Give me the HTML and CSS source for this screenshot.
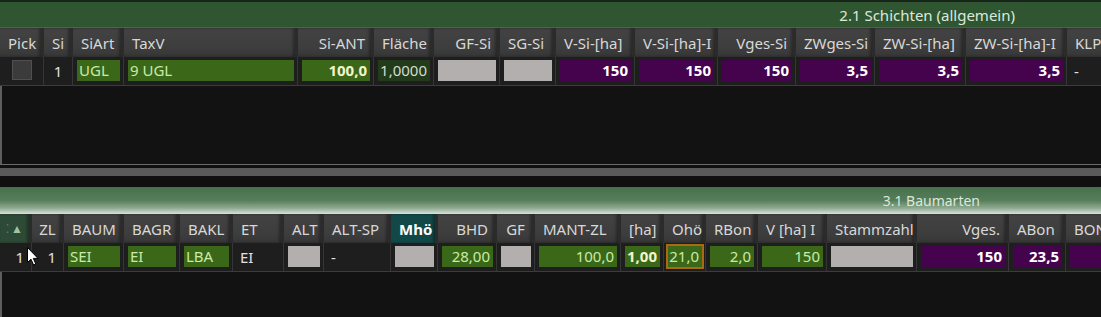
FILE: index.html
```html
<!DOCTYPE html>
<html lang="de">
<head>
  <meta charset="UTF-8">
  <title>Schichten / Baumarten</title>
  <link rel="stylesheet" href="styles.css">
</head>
<body>
  <!-- 2.1 Schichten -->
  <section class="panel panel-top">
    <div class="panel-title top-title">2.1 Schichten (allgemein)</div>
    <div class="grid grid-top">
      <div class="hd">Pick</div>
      <div class="hd">Si</div>
      <div class="hd">SiArt</div>
      <div class="hd">TaxV</div>
      <div class="hd right">Si-ANT</div>
      <div class="hd">Fläche</div>
      <div class="hd right">GF-Si</div>
      <div class="hd">SG-Si</div>
      <div class="hd">V-Si-[ha]</div>
      <div class="hd">V-Si-[ha]-I</div>
      <div class="hd right">Vges-Si</div>
      <div class="hd">ZWges-Si</div>
      <div class="hd">ZW-Si-[ha]</div>
      <div class="hd">ZW-Si-[ha]-I</div>
      <div class="hd">KLP</div>

      <div class="cell"><span class="check"></span></div>
      <div class="cell plain center">1</div>
      <div class="cell"><span class="box green">UGL</span></div>
      <div class="cell"><span class="box green">9 UGL</span></div>
      <div class="cell"><span class="box green num bold pale">100,0</span></div>
      <div class="cell"><span class="box dim num">1,0000</span></div>
      <div class="cell"><span class="box gray"></span></div>
      <div class="cell"><span class="box gray"></span></div>
      <div class="cell"><span class="box purple num bold">150</span></div>
      <div class="cell"><span class="box purple num bold">150</span></div>
      <div class="cell"><span class="box purple num bold">150</span></div>
      <div class="cell"><span class="box purple num bold">3,5</span></div>
      <div class="cell"><span class="box purple num bold">3,5</span></div>
      <div class="cell"><span class="box purple num bold">3,5</span></div>
      <div class="cell plain">-</div>
    </div>
    <div class="empty empty-top"></div>
  </section>

  <div class="splitter"><div class="splitter-bar"></div></div>

  <!-- 3.1 Baumarten -->
  <section class="panel panel-bottom">
    <div class="panel-title bottom-title">3.1 Baumarten</div>
    <div class="grid grid-bottom">
      <div class="hd sort"><span class="dots">⁚</span>▲</div>
      <div class="hd center">ZL</div>
      <div class="hd">BAUM</div>
      <div class="hd">BAGR</div>
      <div class="hd">BAKL</div>
      <div class="hd">ET</div>
      <div class="hd">ALT</div>
      <div class="hd">ALT-SP</div>
      <div class="hd teal">Mhö</div>
      <div class="hd right">BHD</div>
      <div class="hd center">GF</div>
      <div class="hd">MANT-ZL</div>
      <div class="hd">[ha]</div>
      <div class="hd">Ohö</div>
      <div class="hd">RBon</div>
      <div class="hd">V [ha] I</div>
      <div class="hd">Stammzahl</div>
      <div class="hd right">Vges.</div>
      <div class="hd">ABon</div>
      <div class="hd">BON</div>

      <div class="cell plain num rowno">1
        <svg class="cursor" width="12" height="19" viewBox="0 0 12 19">
          <path d="M0.5 0.5 L0.5 15.5 L4 12.2 L6.6 18 L8.8 17 L6.3 11.4 L11 11.4 Z" fill="#fff" stroke="#000" stroke-width="1"/>
        </svg>
      </div>
      <div class="cell plain num">1</div>
      <div class="cell"><span class="box green">SEI</span></div>
      <div class="cell"><span class="box green">EI</span></div>
      <div class="cell"><span class="box green">LBA</span></div>
      <div class="cell plain">EI</div>
      <div class="cell"><span class="box gray"></span></div>
      <div class="cell plain">-</div>
      <div class="cell"><span class="box gray"></span></div>
      <div class="cell"><span class="box green num">28,00</span></div>
      <div class="cell"><span class="box gray"></span></div>
      <div class="cell"><span class="box green num">100,0</span></div>
      <div class="cell"><span class="box green num bold pale">1,00</span></div>
      <div class="cell"><span class="box green num focus">21,0</span></div>
      <div class="cell"><span class="box green num">2,0</span></div>
      <div class="cell"><span class="box green num">150</span></div>
      <div class="cell"><span class="box gray"></span></div>
      <div class="cell"><span class="box purple num bold">150</span></div>
      <div class="cell"><span class="box purple num bold">23,5</span></div>
      <div class="cell"><span class="box purple"></span></div>
    </div>
    <div class="empty empty-bottom"></div>
  </section>
</body>
</html>
```

FILE: styles.css
```css
body {
  margin: 0;
  padding: 0;
  width: 1101px;
  height: 317px;
  overflow: hidden;
  background: #121212;
  font-family: "Noto Sans", "Open Sans", sans-serif;
  font-size: 15px;
  color: #dcdcdc;
}
.panel {
  width: 1101px;
  overflow: hidden;
}
.panel-top {
  border-top: 2px solid #16241a;
}
.panel-title {
  display: flex;
  align-items: center;
  justify-content: flex-end;
  color: #dde8da;
  white-space: nowrap;
}
.top-title {
  height: 25px;
  padding-right: 86px;
  background: #2f5631;
  border-bottom: 1px solid #46664a;
}
.bottom-title {
  height: 27px;
  padding-right: 121px;
  font-size: 14px;
  background: linear-gradient(180deg, #46704d 0%, #577e5a 50%, #8eaa91 78%, #d9e1d9 100%);
}
.grid {
  display: grid;
  grid-template-rows: 29px 28px;
  width: 1130px;
  border-bottom: 1px solid #3c3c3c;
}
.grid-top {
  grid-template-columns: 44px 29px 51px 174px 76px 60px 66px 56px 79px 83px 78px 79px 91px 101px 64px;
}
.grid-bottom {
  grid-template-columns: 32px 32px 60px 56px 53px 51px 40px 67px 47px 59px 38px 86px 43px 42px 52px 69px 90px 92px 57px 64px;
}
.hd {
  display: flex;
  align-items: center;
  padding: 0 6px 0 8px;
  background: linear-gradient(180deg, #434343 0%, #3d3d3d 70%, #363636 100%);
  border-right: 3px solid #2b2b2b;
  box-shadow: inset -2px 0 3px rgba(0, 0, 0, 0.35);
  color: #d8d8d8;
  white-space: nowrap;
  overflow: hidden;
}
.hd.right {
  justify-content: flex-end;
}
.hd.center {
  justify-content: center;
}
.hd.teal {
  background: #134848;
  color: #ffffff;
  font-weight: bold;
}
.hd.sort {
  background: #2d4a36;
  color: #9cc6a2;
  font-size: 12px;
  padding: 0 4px;
  justify-content: center;
}
.dots {
  color: #5f8466;
  margin-right: 2px;
}
.cell {
  display: flex;
  align-items: center;
  padding: 2px 3px 4px 4px;
  background: #1e1e1e;
  border-right: 1px solid #363636;
  white-space: nowrap;
  overflow: hidden;
}
.cell.plain {
  padding: 0 7px;
  color: #e2e2e2;
}
.cell.center {
  justify-content: center;
}
.cell.num {
  justify-content: flex-end;
}
.rowno {
  position: relative;
  overflow: visible;
  padding-right: 11px;
}
.cursor {
  position: absolute;
  left: 27px;
  top: 4px;
}
.box {
  flex: 1;
  height: 21px;
  display: flex;
  align-items: center;
  padding: 0 3px 0 2px;
  overflow: hidden;
}
.box.num {
  justify-content: flex-end;
}
.box.bold {
  font-weight: bold;
}
.green {
  background: #3a6818;
  color: #c8eba8;
}
.green.pale {
  color: #f2f4cc;
}
.dim {
  background: #223b1b;
  color: #d4dccf;
}
.gray {
  background: #b3afaf;
}
.purple {
  background: #45034e;
  color: #ffffff;
}
.focus {
  box-shadow: 0 0 0 2px #a86a12;
}
.check {
  width: 18px;
  height: 18px;
  margin-left: 8px;
  background: #3b3b3b;
  border: 1px solid #505050;
}
.empty {
  border-left: 2px solid #5e5e5e;
}
.empty-top {
  height: 78px;
}
.empty-bottom {
  height: 60px;
}
.splitter {
  height: 19px;
  border-top: 1px solid #6a6a6a;
  padding-top: 3px;
  background: #101010;
}
.splitter-bar {
  height: 8px;
  background: #5a5a5a;
}
```
